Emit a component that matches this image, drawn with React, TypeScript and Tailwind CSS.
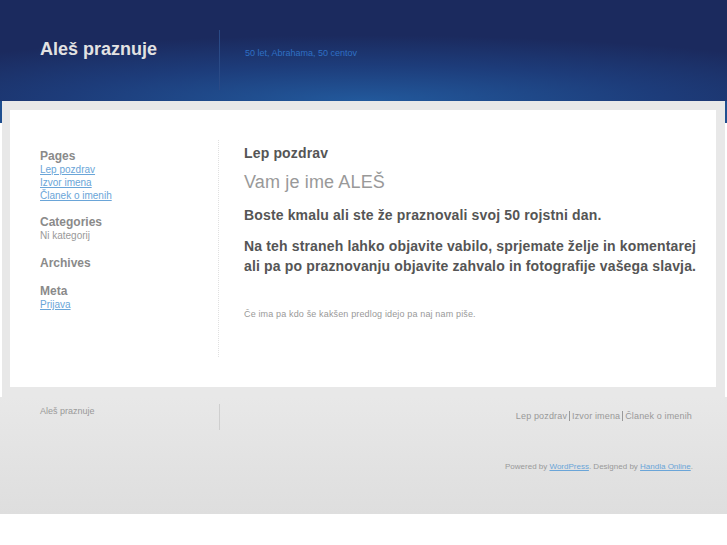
const pages = ["Lep pozdrav", "Izvor imena", "Članek o imenih"];

export default function App() {
  return (
    <div className="min-h-screen bg-white font-['Liberation_Sans',Arial,sans-serif]">
      {/* header */}
      <header className="h-[101px] bg-[radial-gradient(ellipse_75%_65%_at_50%_100%,#22599c_0%,#1d3c7a_55%,#1b2a5e_100%)] flex">
        <div className="w-[219px] pl-10 pt-[39px]">
          <h1 className="text-[18px] font-bold text-[#e2e2e2] leading-5">Aleš praznuje</h1>
        </div>
        <div className="mt-[30px] h-[60px] border-l border-[#2a4a86] pl-[25px] pt-[17px]">
          <p className="text-[9px] text-[#2f70c4] leading-3">50 let, Abrahama, 50 centov</p>
        </div>
      </header>

      {/* body */}
      <div className="bg-[linear-gradient(to_bottom,#1f4f90_0px,#1f4f90_22px,#ffffff_22px)]">
        <div className="mx-[2px] bg-[#e8e8e8] pt-[9px] pb-[10px] pl-[8px] pr-[9px]">
          <div className="bg-white h-[277px] flex pt-[30px]">
            <aside className="w-[209px] pl-[30px] h-[217px] border-r border-dotted border-[#e0e0e0] text-[10px] leading-[13px]">
              <div className="pt-[10px]">
                <h3 className="text-[12px] font-bold text-[#8a8a8a] leading-[13px]">Pages</h3>
                {pages.map((p) => (
                  <a key={p} href="#" className="block text-[#6aa5d8] underline">
                    {p}
                  </a>
                ))}
              </div>
              <div className="mt-[14px]">
                <h3 className="text-[12px] font-bold text-[#8a8a8a] leading-[13px]">Categories</h3>
                <p className="text-[#999]">Ni kategorij</p>
              </div>
              <div className="mt-[15px]">
                <h3 className="text-[12px] font-bold text-[#8a8a8a] leading-[13px]">Archives</h3>
              </div>
              <div className="mt-[15px]">
                <h3 className="text-[12px] font-bold text-[#8a8a8a] leading-[13px]">Meta</h3>
                <a href="#" className="block text-[#6aa5d8] underline">Prijava</a>
              </div>
            </aside>
            <main className="pl-[25px] pt-[4px] text-[#555] tracking-[0.15px]">
              <h2 className="text-[14px] font-bold leading-[18px]">Lep pozdrav</h2>
              <h3 className="mt-[9px] text-[18px] text-[#999] leading-[22px]">Vam je ime ALEŠ</h3>
              <p className="mt-[12px] text-[14px] font-bold leading-5">
                Boste kmalu ali ste že praznovali svoj 50 rojstni dan.
              </p>
              <p className="mt-[11px] text-[14px] font-bold leading-5">
                Na teh straneh lahko objavite vabilo, sprjemate želje in komentarej
                <br />
                ali pa po praznovanju objavite zahvalo in fotografije vašega slavja.
              </p>
              <p className="mt-[32px] text-[9px] text-[#999] leading-3">
                Če ima pa kdo še kakšen predlog idejo pa naj nam piše.
              </p>
            </main>
          </div>
        </div>
      </div>

      {/* footer */}
      <footer className="h-[117px] bg-[linear-gradient(to_bottom,#e8e8e8,#dedede)] text-[#999]">
        <div className="flex">
          <div className="w-[219px] pl-10 pt-[8px]">
            <p className="text-[9px] leading-3">Aleš praznuje</p>
          </div>
          <div className="mt-[7px] h-[26px] border-l border-[#cfcfcf] flex-1 flex justify-end pr-[35px] pt-[6px]">
            <p className="text-[9px] leading-3 tracking-[0.15px]">
              Lep pozdrav<span className="mx-[2px] border-l border-[#999]"></span>Izvor imena
              <span className="mx-[2px] border-l border-[#999]"></span>Članek o imenih
            </p>
          </div>
        </div>
        <p className="mt-[31px] pr-[34px] text-right text-[8px] leading-3">
          Powered by <a href="#" className="text-[#6aa5d8] underline">WordPress</a>. Designed by{" "}
          <a href="#" className="text-[#6aa5d8] underline">Handla Online</a>.
        </p>
      </footer>
    </div>
  );
}
